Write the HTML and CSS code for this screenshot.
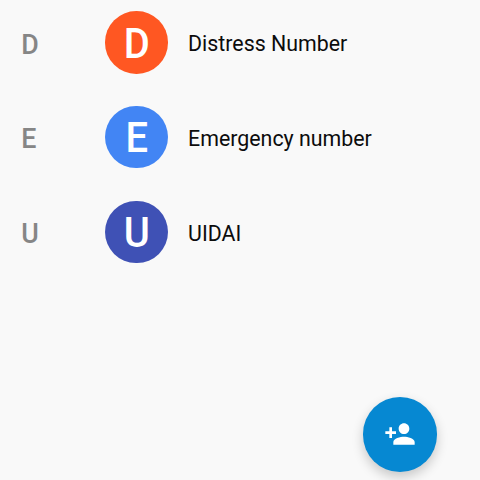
FILE: index.html
```html
<!DOCTYPE html>
<html lang="en">
<head>
<meta charset="utf-8">
<title>Contacts</title>
<link rel="stylesheet" href="styles.css">
</head>
<body>
<main class="contacts">
  <section class="row">
    <span class="index">D</span>
    <span class="avatar avatar-orange"><span class="initial">D</span></span>
    <span class="name">Distress Number</span>
  </section>
  <section class="row">
    <span class="index">E</span>
    <span class="avatar avatar-blue"><span class="initial">E</span></span>
    <span class="name">Emergency number</span>
  </section>
  <section class="row">
    <span class="index">U</span>
    <span class="avatar avatar-indigo"><span class="initial">U</span></span>
    <span class="name">UIDAI</span>
  </section>
</main>
<button class="fab" aria-label="Add contact">
  <svg class="fab-icon" viewBox="0 0 24 24"><path d="M15 12c2.21 0 4-1.79 4-4s-1.790-4-4-4-4 1.790-4 4 1.790 4 4 4zm-9-2V7H4v3H1v2h3v3h2v-3h3v-2H6zm9 4c-2.670 0-8 1.340-8 4v2h16v-2c0-2.660-5.330-4-8-4z"/></svg>
</button>
</body>
</html>
```

FILE: styles.css
```css
body {
  margin: 0;
  height: 480px;
  overflow: hidden;
  background: #f9f9f9;
  font-family: Roboto, sans-serif;
}
.contacts {
  display: flex;
  flex-direction: column;
  gap: 32.2px;
  padding-top: 11.3px;
}
.row {
  display: grid;
  grid-template-columns: 84px 62.5px 1fr;
  align-items: center;
  height: 62.5px;
  padding-left: 21.3px;
}
.index {
  padding-top: 4.4px;
  color: #868686;
  font-size: 26.8px;
  font-weight: 500;
}
.avatar {
  display: flex;
  align-items: center;
  justify-content: center;
  width: 62.5px;
  height: 62.5px;
  border-radius: 50%;
  color: #fff;
  font-size: 42px;
  font-weight: 500;
}
.initial {
  padding-top: 1.4px;
  transform: scaleX(.95);
}
.avatar-orange { background: #ff5722; }
.avatar-blue { background: #4285f4; }
.avatar-indigo { background: #3f51b5; }
.name {
  margin-left: 20.3px;
  padding-top: 2.5px;
  color: #0c0c0c;
  font-size: 21.35px;
}
.fab {
  position: absolute;
  left: 362.5px;
  top: 397px;
  display: flex;
  align-items: center;
  justify-content: center;
  width: 74.5px;
  height: 74.5px;
  padding: 0;
  border: 0;
  border-radius: 50%;
  background: #0688d2;
  box-shadow: 0 5px 12px rgba(0, 0, 0, .2);
}
.fab-icon {
  width: 32px;
  height: 32px;
  fill: #fff;
}
```
